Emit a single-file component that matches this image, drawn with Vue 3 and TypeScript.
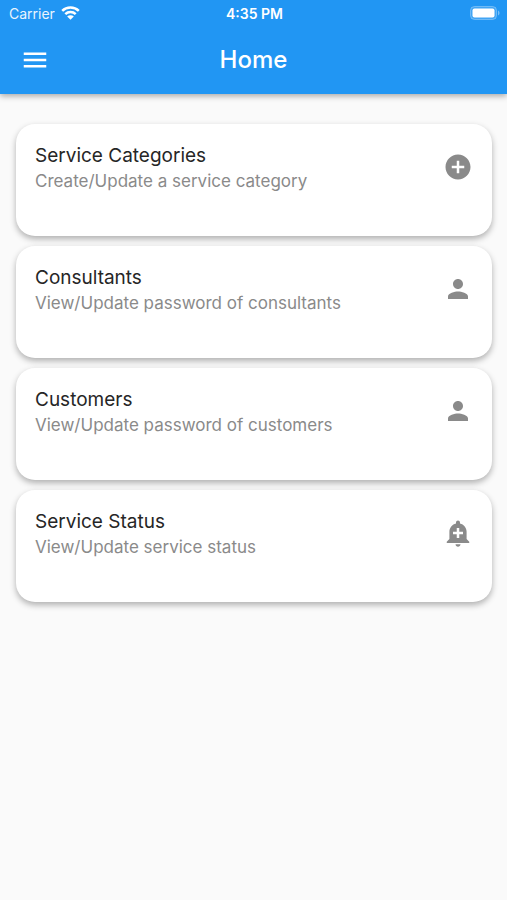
<script setup lang="ts">
interface MenuEntry {
  title: string
  subtitle: string
  icon: string
}

const icons: Record<string, string> = {
  addCircle:
    'M12 2C6.48 2 2 6.48 2 12s4.48 10 10 10 10-4.48 10-10S17.52 2 12 2zm5 11h-4v4h-2v-4H7v-2h4V7h2v4h4v2z',
  person:
    'M12 12c2.21 0 4-1.79 4-4s-1.79-4-4-4-4 1.79-4 4 1.79 4 4 4zm0 2c-2.67 0-8 1.34-8 4v2h16v-2c0-2.66-5.33-4-8-4z',
  addAlert:
    'M10.01 21.01c0 1.1.89 1.99 1.99 1.99s1.99-.89 1.99-1.99h-3.98zm8.87-4.19V11c0-3.25-2.25-5.97-5.29-6.69v-.72C13.59 2.71 12.88 2 12 2s-1.59.71-1.59 1.59v.72C7.37 5.03 5.12 7.75 5.12 11v5.82L3 18.94V20h18v-1.06l-2.12-2.12zM16 13.01h-3v3h-2v-3H8V11h3V8h2v3h3v2.01z',
}

const entries: MenuEntry[] = [
  { title: 'Service Categories', subtitle: 'Create/Update a service category', icon: 'addCircle' },
  { title: 'Consultants', subtitle: 'View/Update password of consultants', icon: 'person' },
  { title: 'Customers', subtitle: 'View/Update password of customers', icon: 'person' },
  { title: 'Service Status', subtitle: 'View/Update service status', icon: 'addAlert' },
]
</script>

<template>
  <div class="screen">
    <header class="header">
      <div class="status">
        <div class="carrier">
          <span>Carrier</span>
          <svg class="wifi" viewBox="0 0 19 14" aria-hidden="true">
            <path d="M1.2 4.8a11.8 11.8 0 0 1 16.6 0" />
            <path d="M4.3 8.2a7.4 7.4 0 0 1 10.4 0" />
            <path class="dot" d="M9.5 13.8 6.2 10.5a4.7 4.7 0 0 1 6.6 0z" />
          </svg>
        </div>
        <span class="time">4:35 PM</span>
        <svg class="battery" viewBox="0 0 30 14" aria-hidden="true">
          <rect class="shell" x="0.5" y="0.5" width="26" height="13" rx="4" />
          <rect x="2.5" y="2.5" width="22" height="9" rx="2" />
          <path class="cap" d="M28 4.5c2 .8 2 4.2 0 5z" />
        </svg>
      </div>
      <div class="toolbar">
        <button class="menu" type="button" aria-label="Open menu">
          <svg class="icon" viewBox="0 0 24 24" aria-hidden="true">
            <path d="M3 18h18v-2H3v2zm0-5h18v-2H3v2zm0-7v2h18V6H3z" />
          </svg>
        </button>
        <h1>Home</h1>
      </div>
    </header>
    <main class="list">
      <button v-for="entry in entries" :key="entry.title" class="card" type="button">
        <span class="text">
          <span class="title">{{ entry.title }}</span>
          <span class="subtitle">{{ entry.subtitle }}</span>
        </span>
        <svg class="icon" viewBox="0 0 24 24" aria-hidden="true">
          <path :d="icons[entry.icon]" />
        </svg>
      </button>
    </main>
  </div>
</template>

<style>
body {
  background: #fafafa;
}
</style>

<style scoped>
.screen {
  min-height: 100vh;
  background: #fafafa;
  font-family: Inter, Roboto, sans-serif;
}
.header {
  background: #2196f3;
  color: #fff;
  box-shadow: 0 2px 6px rgba(0, 0, 0, 0.34);
}
.status,
.toolbar {
  display: grid;
  grid-template-columns: 1fr auto 1fr;
  align-items: center;
}
.status {
  height: 26px;
  padding: 0 7px 0 9px;
  font-size: 14px;
}
.carrier {
  display: flex;
  align-items: center;
  gap: 6px;
}
.carrier span {
  opacity: 0.9;
}
.wifi {
  width: 19px;
  height: 14px;
  fill: none;
  stroke: #fff;
  stroke-width: 2.5;
}
.wifi .dot {
  fill: #fff;
  stroke: none;
}
.time {
  font-weight: 600;
}
.battery {
  justify-self: end;
  width: 30px;
  height: 14px;
  fill: #fff;
}
.battery .shell {
  fill: #fff;
  fill-opacity: 0.15;
  stroke: #fff;
  stroke-opacity: 0.3;
}
.battery .cap {
  fill-opacity: 0.4;
}
.toolbar {
  height: 68px;
  padding: 0 20px;
}
.menu {
  justify-self: start;
  display: flex;
  padding: 0;
  border: 0;
  background: none;
  color: inherit;
}
.icon {
  flex: none;
  width: 30px;
  height: 30px;
  fill: currentColor;
}
h1 {
  margin: 0;
  font-size: 24px;
  line-height: 30px;
  font-weight: 500;
}
.list {
  display: flex;
  flex-direction: column;
  gap: 10px;
  padding: 30px 15px 30px 16px;
}
.card {
  display: flex;
  justify-content: space-between;
  align-items: flex-start;
  min-height: 112px;
  padding: 20px 19px 40px;
  border: 0;
  border-radius: 19px;
  background: #fff;
  box-shadow: 0 3px 6px rgba(0, 0, 0, 0.3);
  color: #8a8a8a;
  font: inherit;
  text-align: left;
}
.card .icon {
  margin-top: 8px;
}
.text {
  display: flex;
  flex-direction: column;
}
.title {
  color: #262626;
  font-size: 19px;
  line-height: 24px;
}
.subtitle {
  font-size: 17px;
  line-height: 26px;
}
</style>
